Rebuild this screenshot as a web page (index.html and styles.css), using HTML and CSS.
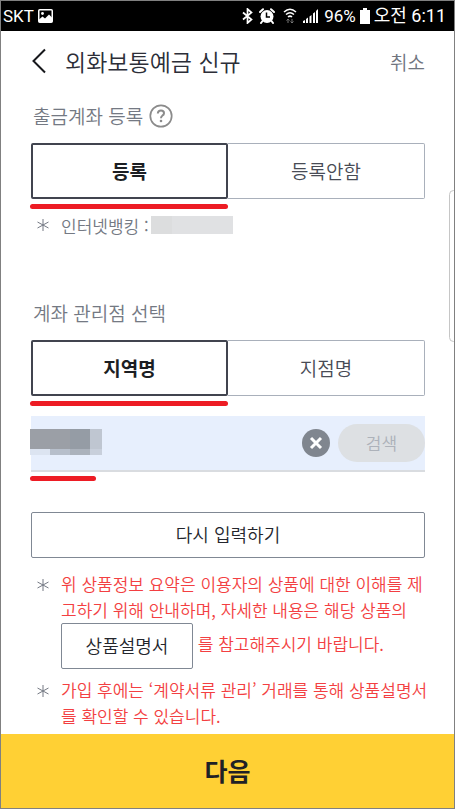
FILE: index.html
```html
<!DOCTYPE html>
<html lang="ko">
<head>
<meta charset="utf-8">
<meta name="viewport" content="width=device-width, initial-scale=1">
<title>외화보통예금 신규</title>
<link rel="stylesheet" href="styles.css">
</head>
<body>
<div class="screen">
  <div class="status">
    <div class="status-group">
      <span class="carrier">SKT</span>
      <svg width="15" height="14" viewBox="0 0 15 14" aria-hidden="true"><rect x=".75" y=".75" width="13.500" height="12.500" rx="1" fill="none" stroke="#fff" stroke-width="1.500"/><path fill="#fff" d="M1 13V10.500L4.500 7.500L7 9.500L11 5.500L14 8.500V13Z"/><circle cx="4.500" cy="4.500" r="1.400" fill="#fff"/></svg>
    </div>
    <div class="status-group right">
      <svg width="11" height="16" viewBox="0 0 11 16" aria-hidden="true"><path d="M1 4.500L9.500 11.500L5.500 15V1L9.500 4.500L1 11.500" fill="none" stroke="#fff" stroke-width="1.700"/></svg>
      <svg class="alarm" width="16" height="16" viewBox="0 0 16 16" aria-hidden="true"><circle cx="8" cy="8.500" r="6.500" fill="#fff"/><path d="M1 4L4 1.200M15 4L12 1.200M3.500 13L2 15M12.500 13L14 15" stroke="#fff" stroke-width="2" stroke-linecap="round"/><path d="M7.500 4.500V9H11" stroke="#000" stroke-width="1.500" fill="none"/></svg>
      <svg class="wifi" width="14" height="16" viewBox="0 0 14 16" aria-hidden="true"><path d="M1 4Q7-1.500 13 4M3 6.500Q7 3 11 6.500M5 9Q7 7.200 9 9" fill="none" stroke="#fff" stroke-width="1.500"/><path d="M5 15V11M3.500 12.500L5 11L6.500 12.500M9 11V15M7.500 13.500L9 15L10.500 13.500" fill="none" stroke="#777"/></svg>
      <svg class="signal" width="16" height="16" viewBox="0 0 16 16" aria-hidden="true"><path d="M0 15V13L2 12V15ZM3 15V11L5 9.500V15ZM6.500 15V8.500L8.500 7V15ZM10 15V5.500L12 4V15ZM13 15V3L15 1V15Z" fill="#fff"/></svg>
      <span>96%</span>
      <svg class="battery" width="10" height="16" viewBox="0 0 10 16" aria-hidden="true"><path d="M3 0H7V2H10V16H0V2H3Z" fill="#fff"/></svg>
      <span class="clock">오전 6:11</span>
    </div>
  </div>

  <header class="header">
    <button class="back" type="button" aria-label="뒤로"><svg width="14" height="26" viewBox="0 0 14 26" aria-hidden="true"><path d="M13 1.500L1.500 13L13 24.500" fill="none" stroke="#17181c" stroke-width="2"/></svg></button>
    <h1 class="title">외화보통예금 신규</h1>
    <button class="cancel" type="button">취소</button>
  </header>

  <main class="content">
    <section class="account">
      <div class="label-row">
        <h2 class="label">출금계좌 등록</h2>
        <button class="help" type="button" aria-label="도움말"><svg width="24" height="24" viewBox="0 0 24 24" aria-hidden="true"><circle cx="12" cy="12" r="10.700" fill="none" stroke="#8b8b8b" stroke-width="1.700"/><path d="M8.800 9.500Q9 6.500 12 6.500Q15 6.500 15 9.200Q15 10.700 13.300 11.700Q12 12.600 12 14.300" fill="none" stroke="#8b8b8b" stroke-width="2"/><circle cx="12" cy="17" r="1.300" fill="#8b8b8b"/></svg></button>
      </div>
      <div class="tabs" role="radiogroup" aria-label="출금계좌 등록">
        <label class="tab"><input type="radio" name="register" checked><span>등록</span></label>
        <label class="tab"><input type="radio" name="register"><span>등록안함</span></label>
      </div>
      <div class="mark half"></div>
      <div class="bank"><svg class="star" viewBox="0 0 12 12" aria-hidden="true"><path d="M6 0V12M.5 3L11.500 9M11.500 3L.5 9"/></svg><span>인터넷뱅킹 :</span><span class="masked"></span></div>
    </section>

    <section class="branch">
      <h2 class="label">계좌 관리점 선택</h2>
      <div class="tabs" role="radiogroup" aria-label="계좌 관리점 선택">
        <label class="tab"><input type="radio" name="branch" checked><span>지역명</span></label>
        <label class="tab"><input type="radio" name="branch"><span>지점명</span></label>
      </div>
      <div class="mark half"></div>
      <div class="search">
        <div class="field">
          <input type="text" aria-label="지역명">
          <div class="mosaic" aria-hidden="true"><i></i><i></i><i></i><i></i><i></i><i></i><i></i><i></i></div>
        </div>
        <button class="clear" type="button" aria-label="지우기"><svg width="28" height="28" viewBox="0 0 28 28" aria-hidden="true"><circle cx="14" cy="14" r="14" fill="#80868f"/><path d="M9 9L19 19M19 9L9 19" stroke="#fff" stroke-width="3"/></svg></button>
        <button class="find" type="button" disabled>검색</button>
      </div>
      <div class="mark short"></div>
    </section>

    <button class="reset" type="button">다시 입력하기</button>

    <ul class="notes">
      <li><svg class="star" viewBox="0 0 12 12" aria-hidden="true"><path d="M6 0V12M.5 3L11.500 9M11.500 3L.5 9"/></svg><p>위 상품정보 요약은 이용자의 상품에 대한 이해를 제고하기 위해 안내하며, 자세한 내용은 해당 상품의 <button class="doc" type="button">상품설명서</button> 를 참고해주시기 바랍니다.</p></li>
      <li><svg class="star" viewBox="0 0 12 12" aria-hidden="true"><path d="M6 0V12M.5 3L11.500 9M11.500 3L.5 9"/></svg><p>가입 후에는 ‘계약서류 관리’ 거래를 통해 상품설명서를 확인할 수 있습니다.</p></li>
    </ul>
  </main>

  <button class="next" type="button">다음</button>
  <div class="edge-handle"></div>
</div>
</body>
</html>
```

FILE: styles.css
```css
* { box-sizing: border-box; }

body {
  margin: 0;
  background: #fff;
  color: #2c2e38;
  font-family: "Noto Sans CJK KR", sans-serif;
  font-weight: 350;
}

button, input { font: inherit; color: inherit; border-radius: 0; }
button { padding: 0; border: 0; background: none; }
h1, h2, p, ul { margin: 0; padding: 0; font-weight: inherit; }
svg { display: block; flex: none; }

.screen {
  position: relative;
  display: flex;
  flex-direction: column;
  min-height: 100vh;
  border: 1px solid #808080;
  overflow: hidden;
}

.status {
  display: flex;
  justify-content: space-between;
  height: 30px;
  padding: 0 8px 0 2px;
  background: #000;
  color: #fff;
  font-family: Roboto, "Noto Sans CJK KR", sans-serif;
  font-size: 17px;
  font-weight: 400;
  line-height: 30px;
}
.status-group { display: flex; align-items: center; gap: 4px; }
.alarm { margin-left: 2px; }
.wifi { margin-left: 4px; }
.signal { margin: 0 1px 0 2px; }
.clock { font-size: 18px; }

.header {
  display: flex;
  align-items: center;
  height: 60px;
  padding: 0 29px 0 31px;
}
.title { flex: 1; margin-left: 19px; font-size: 23px; line-height: 34px; }
.cancel { font-size: 19px; color: #70757f; }

.content { flex: 1; padding: 0 29px; }

.label-row { display: flex; align-items: center; gap: 6px; height: 50px; }
.label { padding-left: 3px; font-size: 19px; line-height: 28px; color: #747983; }

.tabs { display: flex; height: 56px; margin: 2px 0 5px; padding-left: 1px; }
.tab { position: relative; flex: 1; display: flex; }
.tab input { position: absolute; opacity: 0; margin: 0; }
.tab span {
  flex: 1;
  display: flex;
  align-items: center;
  justify-content: center;
  padding-bottom: 2px;
  border: 1px solid #a9b0bb;
  border-left: 0;
  border-radius: 0 2px 2px 0;
  font-size: 19px;
  color: #484b55;
}
.tab input:checked + span {
  border: 2px solid #41444f;
  border-radius: 2px;
  font-weight: 700;
  color: #1c1e23;
}

.mark { height: 5px; border-radius: 3px; background: #ed1c24; }
.half { width: 50%; }
.short { width: 66px; }

.star { width: 12px; height: 12px; fill: none; stroke: #747983; }
.bank {
  display: flex;
  align-items: center;
  height: 32px;
  padding-left: 7px;
  font-size: 17px;
  color: #747983;
}
.bank .star { margin-right: 12px; }
.masked {
  width: 82px;
  height: 18px;
  margin-left: 2px;
  background: linear-gradient(90deg, #dcddde 25%, #e0e1e3 25%);
}

.branch { margin-top: 58px; }
.branch .label { margin-bottom: 13px; }

.search {
  display: flex;
  align-items: center;
  height: 56px;
  margin: 10px 0 4px 1px;
  border-bottom: 2px solid #d9dce0;
  background: #e7effd;
}
.field { position: relative; flex: 1; min-width: 0; }
.field input {
  display: block;
  width: 100%;
  height: 54px;
  border: 0;
  outline: 0;
  background: none;
}
.mosaic {
  position: absolute;
  top: 13px;
  left: -1px;
  display: grid;
  grid-template: 20px 6px / 20px 20px 20px 12px;
}
.mosaic i { background: #9b9fa6; }
.mosaic i:nth-child(3) { background: #959ca5; }
.mosaic i:nth-child(4) { background: #bfc6d1; }
.mosaic i:nth-child(5) { background: #dce4f1; }
.mosaic i:nth-child(6) { background: #b7bfcb; }
.mosaic i:nth-child(7) { background: #abb2bc; }
.mosaic i:nth-child(8) { background: #c8cfdb; }
.find {
  width: 87px;
  height: 38px;
  margin-left: 8px;
  padding-bottom: 2px;
  border-radius: 19px;
  background: #dde0e3;
  font-size: 17px;
  color: #adb2ba;
}

.reset, .doc {
  padding-bottom: 2px;
  border: 1px solid #808894;
  border-radius: 2px;
  font-size: 18px;
  color: #24262d;
}
.reset { display: block; width: calc(100% - 1px); height: 46px; margin: 31px 0 0 1px; }

.notes {
  margin: 13px -4px 0 0;
  list-style: none;
  font-size: 17px;
  line-height: 26px;
  color: #f33f42;
}
.notes li { display: flex; padding-left: 7px; }
.notes .star { margin: 8px 12px 0 0; }
.doc { width: 132px; height: 46px; margin: 0; vertical-align: middle; }
.notes li + li { margin-top: 8px; }

.next {
  height: 74px;
  padding-bottom: 2px;
  background: #ffd034;
  font-size: 25px;
  font-weight: 700;
  color: #1f2126;
}

.edge-handle {
  position: absolute;
  top: 189px;
  right: -4px;
  width: 9px;
  height: 152px;
  border: 1px solid #c6c6c6;
  border-radius: 5px;
  background: #fff;
}
```
